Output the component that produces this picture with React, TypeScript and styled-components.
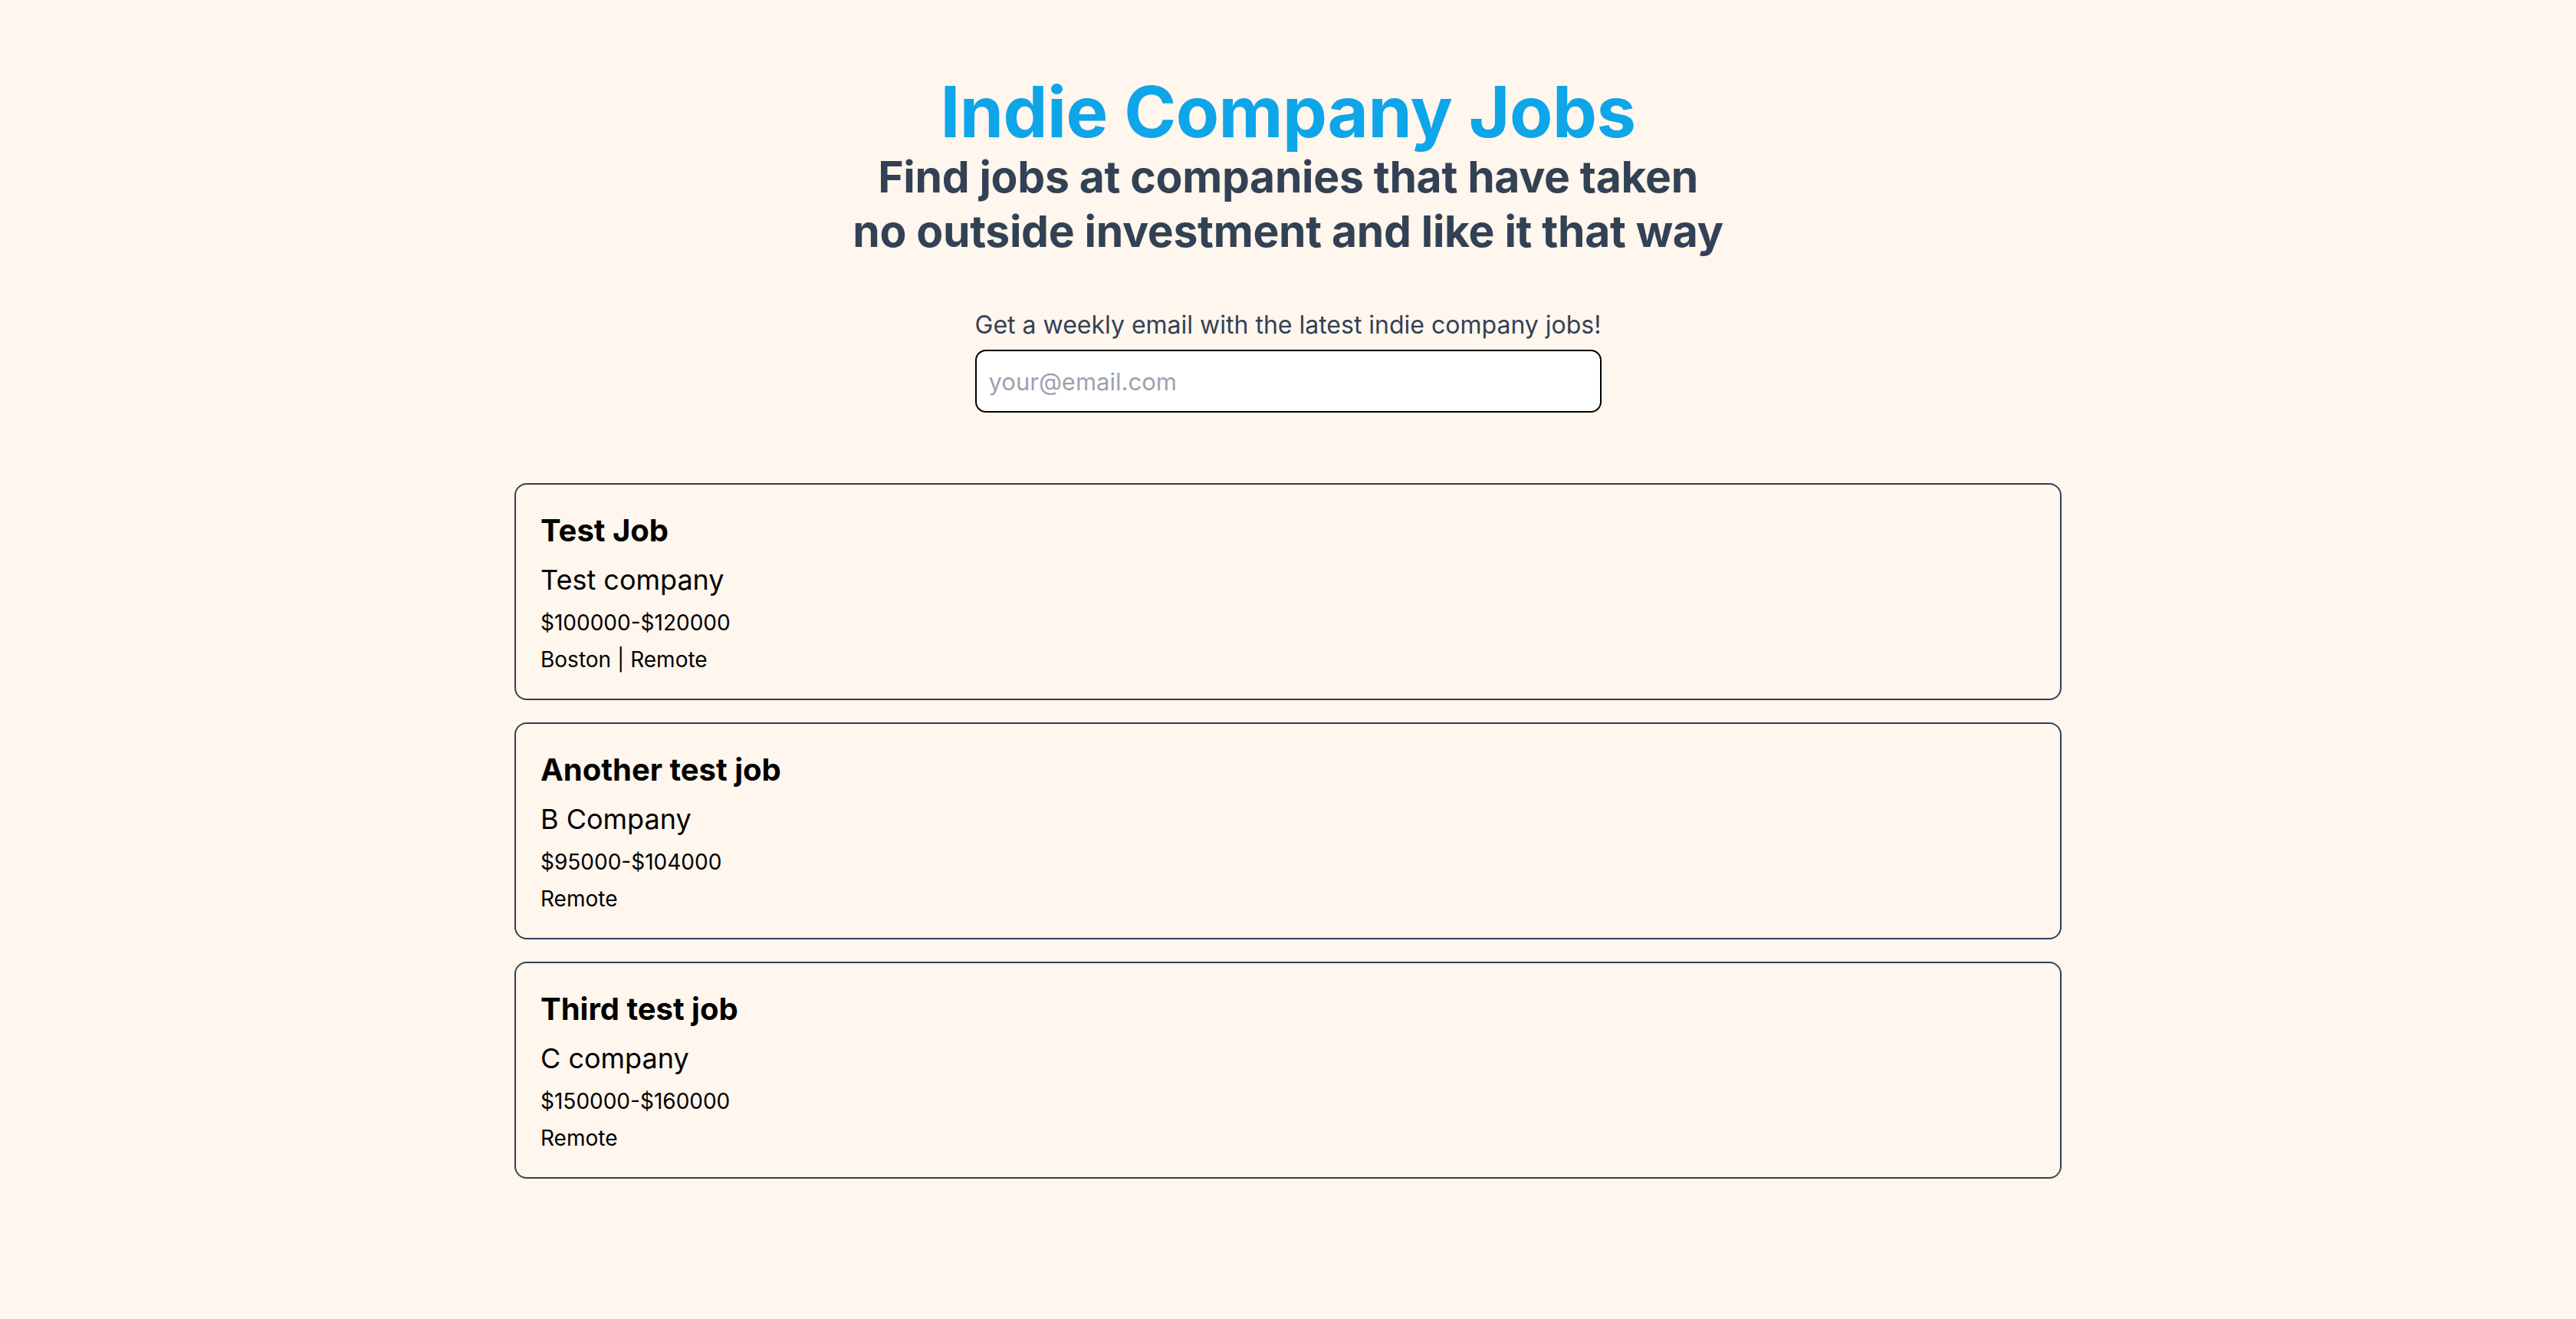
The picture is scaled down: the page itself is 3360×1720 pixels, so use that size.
import styled, { createGlobalStyle } from 'styled-components';

const GlobalStyle = createGlobalStyle`
  * {
    box-sizing: border-box;
  }

  html,
  body {
    margin: 0;
    padding: 0;
    background: #fff6ed;
    font-family: Inter, "Noto Sans", sans-serif;
    color: #000;
  }
`;

const Page = styled.main`
  min-height: 1720px;
  display: flex;
  flex-direction: column;
  align-items: center;
  padding-top: 100px;
`;

const Header = styled.header`
  display: flex;
  flex-direction: column;
  align-items: center;
  text-align: center;
`;

const Title = styled.h1`
  margin: 0;
  font-size: 92px;
  line-height: 92px;
  font-weight: 700;
  letter-spacing: -0.5px;
  color: #0ea5e9;
`;

const Tagline = styled.h2`
  margin: 3px 0 0;
  font-size: 57px;
  line-height: 71px;
  font-weight: 700;
  letter-spacing: -0.3px;
  color: #334155;
`;

const Signup = styled.form`
  margin-top: 63px;
  display: flex;
  flex-direction: column;
  align-items: center;
  gap: 8px;
`;

const SignupLabel = styled.label`
  font-size: 32px;
  line-height: 48px;
  color: #334155;
  text-align: center;
`;

const EmailInput = styled.input`
  width: 817px;
  height: 82px;
  padding: 0 16px;
  border: 2px solid #000;
  border-radius: 14px;
  background: #fff;
  font-family: Inter, "Noto Sans", sans-serif;
  font-size: 31px;
  color: #111827;
  outline: none;

  &::placeholder {
    color: #9ca3af;
  }
`;

const JobList = styled.section`
  margin-top: 92px;
  width: 2018px;
  display: flex;
  flex-direction: column;
  gap: 29px;
`;

const JobCard = styled.article`
  border: 2px solid #334155;
  border-radius: 16px;
  padding: 32px 32px 31px;
  display: flex;
  flex-direction: column;
  gap: 8px;
`;

const JobTitle = styled.h3`
  margin: 0;
  font-size: 40px;
  line-height: 56px;
  font-weight: 700;
`;

const Company = styled.div`
  font-size: 36px;
  line-height: 56px;
`;

const Detail = styled.div`
  font-size: 28px;
  line-height: 40px;
`;

type Job = {
  id: number;
  title: string;
  company: string;
  salary: string;
  location: string;
};

const jobs: Job[] = [
  { id: 1, title: 'Test Job', company: 'Test company', salary: '$100000-$120000', location: 'Boston | Remote' },
  { id: 2, title: 'Another test job', company: 'B Company', salary: '$95000-$104000', location: 'Remote' },
  { id: 3, title: 'Third test job', company: 'C company', salary: '$150000-$160000', location: 'Remote' },
];

const App: React.FC = () => {
  return (
    <>
      <GlobalStyle />
      <Page>
        <Header>
          <Title>Indie Company Jobs</Title>
          <Tagline>
            Find jobs at companies that have taken
            <br />
            no outside investment and like it that way
          </Tagline>
        </Header>

        <Signup onSubmit={e => e.preventDefault()}>
          <SignupLabel htmlFor="email">Get a weekly email with the latest indie company jobs!</SignupLabel>
          <EmailInput id="email" type="email" placeholder="your@email.com" />
        </Signup>

        <JobList>
          {jobs.map(job => (
            <JobCard key={job.id}>
              <JobTitle>{job.title}</JobTitle>
              <Company>{job.company}</Company>
              <Detail>{job.salary}</Detail>
              <Detail>{job.location}</Detail>
            </JobCard>
          ))}
        </JobList>
      </Page>
    </>
  );
};

export default App;
